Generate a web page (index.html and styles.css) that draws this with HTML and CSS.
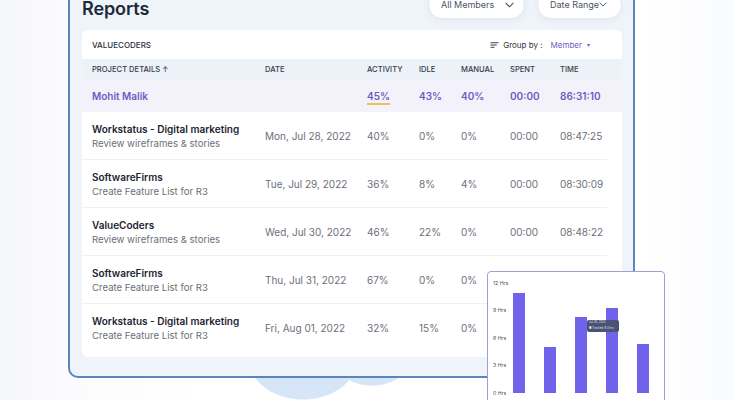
FILE: index.html
```html
<!DOCTYPE html>
<html lang="en">
<head>
<meta charset="utf-8">
<title>Reports</title>
<link rel="stylesheet" href="styles.css">
</head>
<body>
<div class="stage">
  <section class="frame">
    <header class="frame-head">
      <h1 class="title">Reports</h1>
      <div class="filters">
        <button class="pill">All Members <svg class="chev" viewBox="0 0 10 6" width="9" height="6"><polyline points="1,1 5,5 9,1" fill="none" stroke="#4b5563" stroke-width="1.2" stroke-linecap="round" stroke-linejoin="round"/></svg></button>
        <button class="pill pill-date">Date Range <svg class="chev" viewBox="0 0 10 6" width="8" height="5"><polyline points="1,1 5,5 9,1" fill="none" stroke="#4b5563" stroke-width="1.2" stroke-linecap="round" stroke-linejoin="round"/></svg></button>
      </div>
    </header>

    <div class="card">
      <div class="card-top">
        <span class="org">VALUECODERS</span>
        <span class="group">
          <svg class="sort-ic" viewBox="0 0 10 8" width="9" height="8"><path d="M1 1.5h8M1 4h6M1 6.5h3.5" stroke="#374151" stroke-width="1.2" stroke-linecap="round"/></svg>
          Group by :
          <span class="member">Member</span>
          <span class="caret">▾</span>
        </span>
      </div>

      <div class="row head">
        <span>PROJECT DETAILS <span class="arrow">↑</span></span>
        <span>DATE</span>
        <span>ACTIVITY</span>
        <span>IDLE</span>
        <span>MANUAL</span>
        <span>SPENT</span>
        <span>TIME</span>
      </div>

      <div class="row summary">
        <span>Mohit Malik</span>
        <span></span>
        <span><span class="uline">45%</span></span>
        <span>43%</span>
        <span>40%</span>
        <span>00:00</span>
        <span>86:31:10</span>
      </div>

      <div class="row item">
        <span class="proj"><b>Workstatus - Digital marketing</b><small>Review wireframes &amp; stories</small></span>
        <span>Mon, Jul 28, 2022</span>
        <span>40%</span><span>0%</span><span>0%</span><span>00:00</span><span>08:47:25</span>
      </div>
      <div class="row item">
        <span class="proj"><b>SoftwareFirms</b><small>Create Feature List for R3</small></span>
        <span>Tue, Jul 29, 2022</span>
        <span>36%</span><span>8%</span><span>4%</span><span>00:00</span><span>08:30:09</span>
      </div>
      <div class="row item">
        <span class="proj"><b>ValueCoders</b><small>Review wireframes &amp; stories</small></span>
        <span>Wed, Jul 30, 2022</span>
        <span>46%</span><span>22%</span><span>0%</span><span>00:00</span><span>08:48:22</span>
      </div>
      <div class="row item">
        <span class="proj"><b>SoftwareFirms</b><small>Create Feature List for R3</small></span>
        <span>Thu, Jul 31, 2022</span>
        <span>67%</span><span>0%</span><span>0%</span><span>00:00</span><span>08:21:13</span>
      </div>
      <div class="row item last">
        <span class="proj"><b>Workstatus - Digital marketing</b><small>Create Feature List for R3</small></span>
        <span>Fri, Aug 01, 2022</span>
        <span>32%</span><span>15%</span><span>0%</span><span>00:00</span><span>08:10:42</span>
      </div>
    </div>
  </section>

  <aside class="chart">
    <div class="axis">
      <span>12 Hrs</span><span>9 Hrs</span><span>6 Hrs</span><span>3 Hrs</span><span>0 Hrs</span>
    </div>
    <div class="plot">
      <div class="bar" style="height:100px"></div>
      <div class="bar" style="height:46px"></div>
      <div class="bar" style="height:76px"></div>
      <div class="bar" style="height:85px"></div>
      <div class="bar" style="height:49px"></div>
    </div>
    <div class="tip"><span>Jul 30, 2022</span><span>● Tracked: 8.3 hrs</span></div>
  </aside>
</div>
</body>
</html>
```

FILE: styles.css
```css
* { box-sizing: border-box; }
html, body { margin: 0; padding: 0; }
body {
  width: 734px;
  height: 400px;
  overflow: hidden;
  font-family: Inter, "Noto Sans", Arial, sans-serif;
  color: #1f2633;
  background:
    radial-gradient(ellipse 56px 44px at 303px 356px, #d7e5f8 98%, transparent 100%),
    radial-gradient(ellipse 42px 34px at 372px 352px, #d7e5f8 98%, transparent 100%),
    linear-gradient(90deg, #f5f6f9 0, #fbfbfd 60px, #ffffff 200px, #ffffff 640px, #fafbfd 734px);
}
.stage {
  position: relative;
  display: flow-root;
  width: 734px;
  height: 400px;
  padding-left: 68px;
}
.frame {
  width: 567px;
  margin-top: -16px;
  background: #eff3fa;
  border: 2px solid #5a86bd;
  border-top: none;
  border-radius: 0 0 10px 10px;
  padding: 6px 11px 19px 12px;
}
.frame-head {
  display: flex;
  align-items: center;
  justify-content: space-between;
  height: 28px;
  margin-bottom: 12px;
}
.title {
  margin: 8px 0 0;
  font-size: 18px;
  font-weight: 600;
  color: #1c2a3a;
  letter-spacing: -0.1px;
}
.filters { display: flex; gap: 12px; margin-top: 1px; }
.pill {
  display: flex;
  align-items: center;
  justify-content: space-between;
  height: 28px;
  width: 97px;
  padding: 0 10px 0 12px;
  background: #ffffff;
  border: 1px solid #e4e8ef;
  border-radius: 14px;
  box-shadow: 0 2px 6px rgba(60, 80, 120, 0.05);
  font-family: inherit;
  font-size: 9px;
  color: #4b5563;
  white-space: nowrap;
}
.pill-date { width: 85px; padding: 0 14px 0 12px; }
.chev { display: block; flex: none; }

.card {
  background: #ffffff;
  border-radius: 6px;
  padding-bottom: 5px;
  overflow: hidden;
}
.card-top {
  display: flex;
  align-items: center;
  justify-content: space-between;
  height: 29px;
  padding: 0 32px 0 10px;
  font-size: 8px;
  color: #2a313c;
}
.org { font-weight: 500; }
.group { display: flex; align-items: center; gap: 3px; font-size: 8px; color: #2d3440; }
.sort-ic { margin-right: 1px; }
.member { color: #6b5fc0; margin-left: 5px; }
.caret { color: #6b5fc0; font-size: 6px; margin-left: 2px; }

.row {
  display: grid;
  grid-template-columns: 173px 102px 52px 42px 49px 50px 1fr;
  align-items: center;
  padding-left: 10px;
}
.head {
  height: 21px;
  background: #edf1f8;
  font-size: 7.6px;
  font-weight: 500;
  color: #353d4a;
}
.arrow { font-size: 7px; }
.summary {
  height: 32px;
  background: #f3f2fb;
  font-size: 10px;
  font-weight: 600;
  color: #6b5dc2;
}
.uline {
  display: inline-block;
  border-bottom: 2px solid #e8c35c;
  padding-bottom: 1px;
  margin-top: 3px;
}
.item {
  height: 48px;
  font-size: 10px;
  color: #6b7079;
  border-bottom: 1px solid #eef0f4;
  margin-right: 15px;
}
.item.last { border-bottom: none; }
.proj { display: flex; flex-direction: column; gap: 3px; }
.proj b { font-size: 10px; font-weight: 600; color: #1e2533; }
.proj small { font-size: 9.6px; color: #6b7079; }

.chart {
  position: absolute;
  left: 487px;
  top: 271px;
  width: 178px;
  height: 140px;
  background: #ffffff;
  border: 1.5px solid #a39cd9;
  border-radius: 4px;
  display: flex;
  padding: 7.5px 0 0 5px;
}
.axis {
  width: 20px;
  height: 116px;
  display: flex;
  flex-direction: column;
  justify-content: space-between;
  font-size: 5.2px;
  line-height: 6px;
  color: #4a4f5a;
}
.plot {
  display: flex;
  align-items: flex-end;
  gap: 19px;
  height: 113px;
}
.bar {
  width: 12px;
  background: #7062ea;
}
.tip {
  position: absolute;
  left: 99px;
  top: 47.5px;
  width: 32px;
  height: 12px;
  background: #4b5373;
  border-radius: 2px;
  display: flex;
  flex-direction: column;
  justify-content: center;
  padding-left: 2px;
  font-size: 2.8px;
  line-height: 5.5px;
  color: #dfe3ee;
  white-space: nowrap;
  overflow: hidden;
}
.tip span { display: block; height: 5.5px; }
```
